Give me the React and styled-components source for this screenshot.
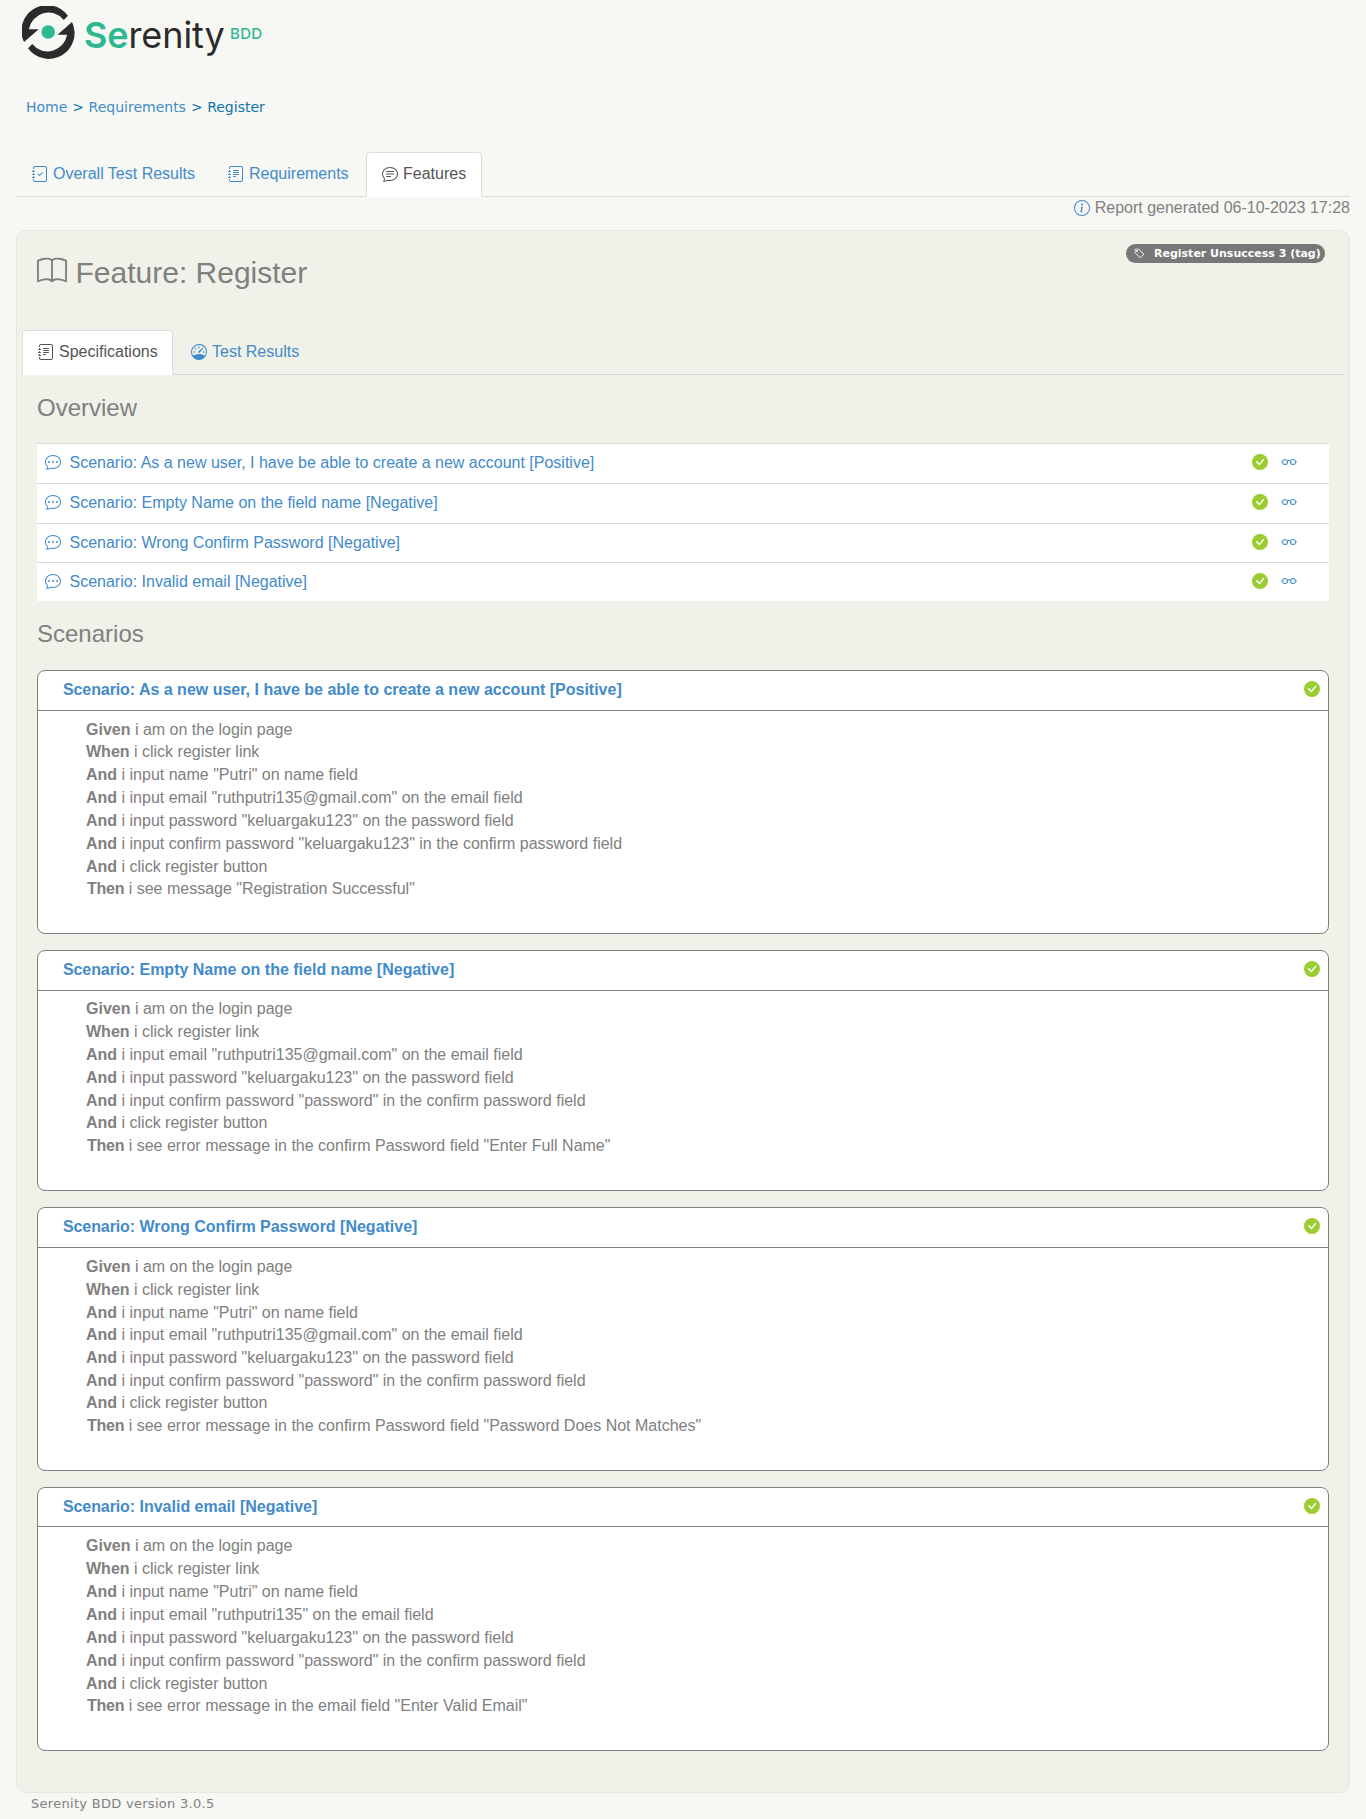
import React from "react";
import styled, { createGlobalStyle } from "styled-components";
import { BsJournalCheck, BsJournalText, BsChatText, BsBook, BsInfoCircle, BsTag, BsSpeedometer, BsChatDots, BsCheckCircleFill, BsEyeglasses } from "react-icons/bs";

const Global = createGlobalStyle`
  *{box-sizing:border-box}
  body{margin:0;background:#f7f8f3;color:#808080;font:16px/24px "Liberation Sans",Arial,sans-serif}
  svg{flex:none;display:block}
`;
const Page = styled.div`width:1366px;height:1819px;padding:0 16px;display:flex;flex-direction:column;overflow:hidden;`;
const Header = styled.header`height:90px;padding:6px 0 0 6px;display:flex;align-items:flex-start;`;
const Wordmark = styled.div`display:flex;font:400 36px/40px Inter,sans-serif;color:#2b2b2b;padding:9px 0 0 9px;width:155px;white-space:nowrap;letter-spacing:-0.1px;
  b{color:#2eb88f;font-weight:600}`;
const Bdd = styled.span`font:500 15px/20px Inter,sans-serif;letter-spacing:0.3px;color:#2eb88f;padding-top:18px;`;
const Crumbs = styled.nav`display:flex;gap:6px;height:62px;padding:7px 0 0 10px;font:14px/20px "DejaVu Sans",sans-serif;color:#0f6fa8;white-space:nowrap;`;
const Separator = styled.span`margin:0 -1.5px 0 -1px;`;
const Link = styled.a`color:${p => p.$current ? "#0f75ad" : "#428bca"};text-decoration:none;`;
const Tabs = styled.div`display:flex;gap:${p => p.$inner ? 2 : 0}px;height:45px;border-bottom:1px solid #d9dadc;margin:${p => p.$inner ? "0 5px" : "0"};`;
const Tab = styled.div`display:flex;align-items:center;gap:5px;height:45px;width:${p => p.$w}px;padding:0 0 2px 15px;white-space:nowrap;
  border:1px solid ${p => p.$active ? "#dcdddf" : "transparent"};border-bottom-color:${p => p.$active ? "#fff" : "transparent"};border-radius:4px 4px 0 0;
  background:${p => p.$active ? "#fff" : "transparent"};color:${p => p.$active ? "#555" : "#428bca"};`;
const Report = styled.div`display:flex;justify-content:flex-end;align-items:center;gap:5px;height:33px;padding-bottom:11px;svg{color:#428bca;margin-bottom:1px}`;
const Panel = styled.main`height:1563px;border:1px solid #e6e7e2;border-radius:10px;background:#f0f1e8;display:flex;flex-direction:column;`;
const TitleRow = styled.div`display:flex;justify-content:space-between;height:99px;padding:13px 24px 0 20px;`;
const Title = styled.h1`display:flex;gap:8.5px;margin:11px 0 0;font-weight:400;font-size:30px;line-height:35px;height:36px;svg{margin-top:1px}`;
const Badge = styled.span`display:flex;align-items:center;gap:9px;width:199px;height:19px;border-radius:10px;background:#777;color:#fff;padding:1px 0 0 8px;font:bold 11px/18px "DejaVu Sans",sans-serif;white-space:nowrap;svg{margin-bottom:2px}`;
const Body = styled.div`padding:0 20px;`;
const Subtitle = styled.h2`font-size:24px;line-height:28px;font-weight:400;margin:0;height:${p => p.$h}px;padding-top:${p => p.$top}px;`;
const Table = styled.div`background:#fff;`;
const Row = styled.div`display:flex;align-items:center;height:${p => p.$h}px;border-top:1px solid #d9dbdd;padding:0 32px 3px 8px;color:#428bca;`;
const RowName = styled.span`flex:1;padding:${p => p.$drop}px 0 0 8.5px;`;
const Check = styled(BsCheckCircleFill)`color:#9acd32;margin-right:${p => p.$gap || 0}px;`;
const Card = styled.section`height:${p => p.$h}px;border:1px solid #808080;border-radius:8px;background:#fff;margin-bottom:16px;`;
const CardHead = styled.header`display:flex;justify-content:space-between;align-items:center;height:${p => p.$h}px;border-bottom:1px solid #808080;padding:0 8px ${p => p.$h === 39 ? 1 : 2}px 25px;font-weight:700;color:#428bca;svg{margin-bottom:1px}`;
const Prefix = styled.span`letter-spacing:-0.1px;`;
const Steps = styled.div`padding:${p => p.$top}px 0 0 48px;`;
const Step = styled.div`height:${p => p.$short ? 22 : 23}px;line-height:22px;white-space:nowrap;padding-left:${p => p.$then ? 1 : 0}px;
  b{letter-spacing:${p => p.$then ? -0.25 : 0}px}`;
const Footer = styled.footer`padding:1px 0 0 15px;font:13px/20px "DejaVu Sans",sans-serif;letter-spacing:0.29px;`;

const overview = [
  ["As a new user, I have be able to create a new account [Positive]", 40],
  ["Empty Name on the field name [Negative]", 40],
  ["Wrong Confirm Password [Negative]", 39],
  ["Invalid email [Negative]", 39],
];
const given = "Given i am on the login page";
const when = "When i click register link";
const name = 'And i input name "Putri" on name field';
const email = 'And i input email "ruthputri135@gmail.com" on the email field';
const password = 'And i input password "keluargaku123" on the password field';
const confirm = v => `And i input confirm password "${v}" in the confirm password field`;
const click = "And i click register button";
const cards = [
  { h: 264, head: 40, top: 8, short: [0, 6], steps: [given, when, name, email, password, confirm("keluargaku123"), click, 'Then i see message "Registration Successful"'] },
  { h: 241, head: 40, top: 7, short: [4], steps: [given, when, email, password, confirm("password"), click, 'Then i see error message in the confirm Password field "Enter Full Name"'] },
  { h: 264, head: 40, top: 8, short: [2, 5], steps: [given, when, name, email, password, confirm("password"), click, 'Then i see error message in the confirm Password field "Password Does Not Matches"'] },
  { h: 264, head: 39, top: 8, short: [6], steps: [given, when, name, 'And i input email "ruthputri135" on the email field', password, confirm("password"), click, 'Then i see error message in the email field "Enter Valid Email"'] },
];

function Logo() {
  return (
    <svg width="53" height="53" viewBox="0 0 53 53">
      <path d="M46 9.8A25.7 25.7 0 0 0 2 36L16.7 23.3H6.9A19.8 19.8 0 0 1 41.8 13.9Z" fill="#2b2b2b" />
      <path d="M6 42.2A25.7 25.7 0 0 0 50 16L35.5 28.7H45.1A19.8 19.8 0 0 1 10.2 38.1Z" fill="#2b2b2b" />
      <circle cx="26.2" cy="26" r="6.8" fill="#2eb88f" />
    </svg>
  );
}
function StepLine({ text, short }) {
  const i = text.indexOf(" ");
  return <Step $short={short} $then={text.startsWith("Then")}><b>{text.slice(0, i)}</b>{text.slice(i)}</Step>;
}
export default function App() {
  return (
    <Page>
      <Global />
      <Header><Logo /><Wordmark><b>Se</b>renity</Wordmark><Bdd>BDD</Bdd></Header>
      <Crumbs><Link>Home</Link><Separator>&gt;</Separator><Link>Requirements</Link><Separator>&gt;</Separator><Link $current>Register</Link></Crumbs>
      <Tabs>
        <Tab $w={196}><BsJournalCheck />Overall Test Results</Tab>
        <Tab $w={154}><BsJournalText />Requirements</Tab>
        <Tab $w={116} $active><BsChatText />Features</Tab>
      </Tabs>
      <Report><BsInfoCircle />Report generated 06-10-2023 17:28</Report>
      <Panel>
        <TitleRow>
          <Title><BsBook />Feature: Register</Title>
          <Badge><BsTag size={11} />Register Unsuccess 3 (tag)</Badge>
        </TitleRow>
        <Tabs $inner>
          <Tab $w={151} $active><BsJournalText />Specifications</Tab>
          <Tab $w={140}><BsSpeedometer />Test Results</Tab>
        </Tabs>
        <Body>
          <Subtitle $h={68} $top={19}>Overview</Subtitle>
          <Table>
            {overview.map(([text, h]) => <Row key={text} $h={h}><BsChatDots /><RowName $drop={h === 39 ? 2 : 1}>Scenario: {text}</RowName><Check $gap={13} /><BsEyeglasses /></Row>)}
          </Table>
          <Subtitle $h={69} $top={19}>Scenarios</Subtitle>
          {cards.map((c, i) => (
            <Card key={i} $h={c.h}>
              <CardHead $h={c.head}><span><Prefix>Scenario:</Prefix> {overview[i][0]}</span><Check /></CardHead>
              <Steps $top={c.top}>{c.steps.map((s, n) => <StepLine key={s} text={s} short={c.short.includes(n)} />)}</Steps>
            </Card>
          ))}
        </Body>
      </Panel>
      <Footer>Serenity BDD version 3.0.5</Footer>
    </Page>
  );
}
